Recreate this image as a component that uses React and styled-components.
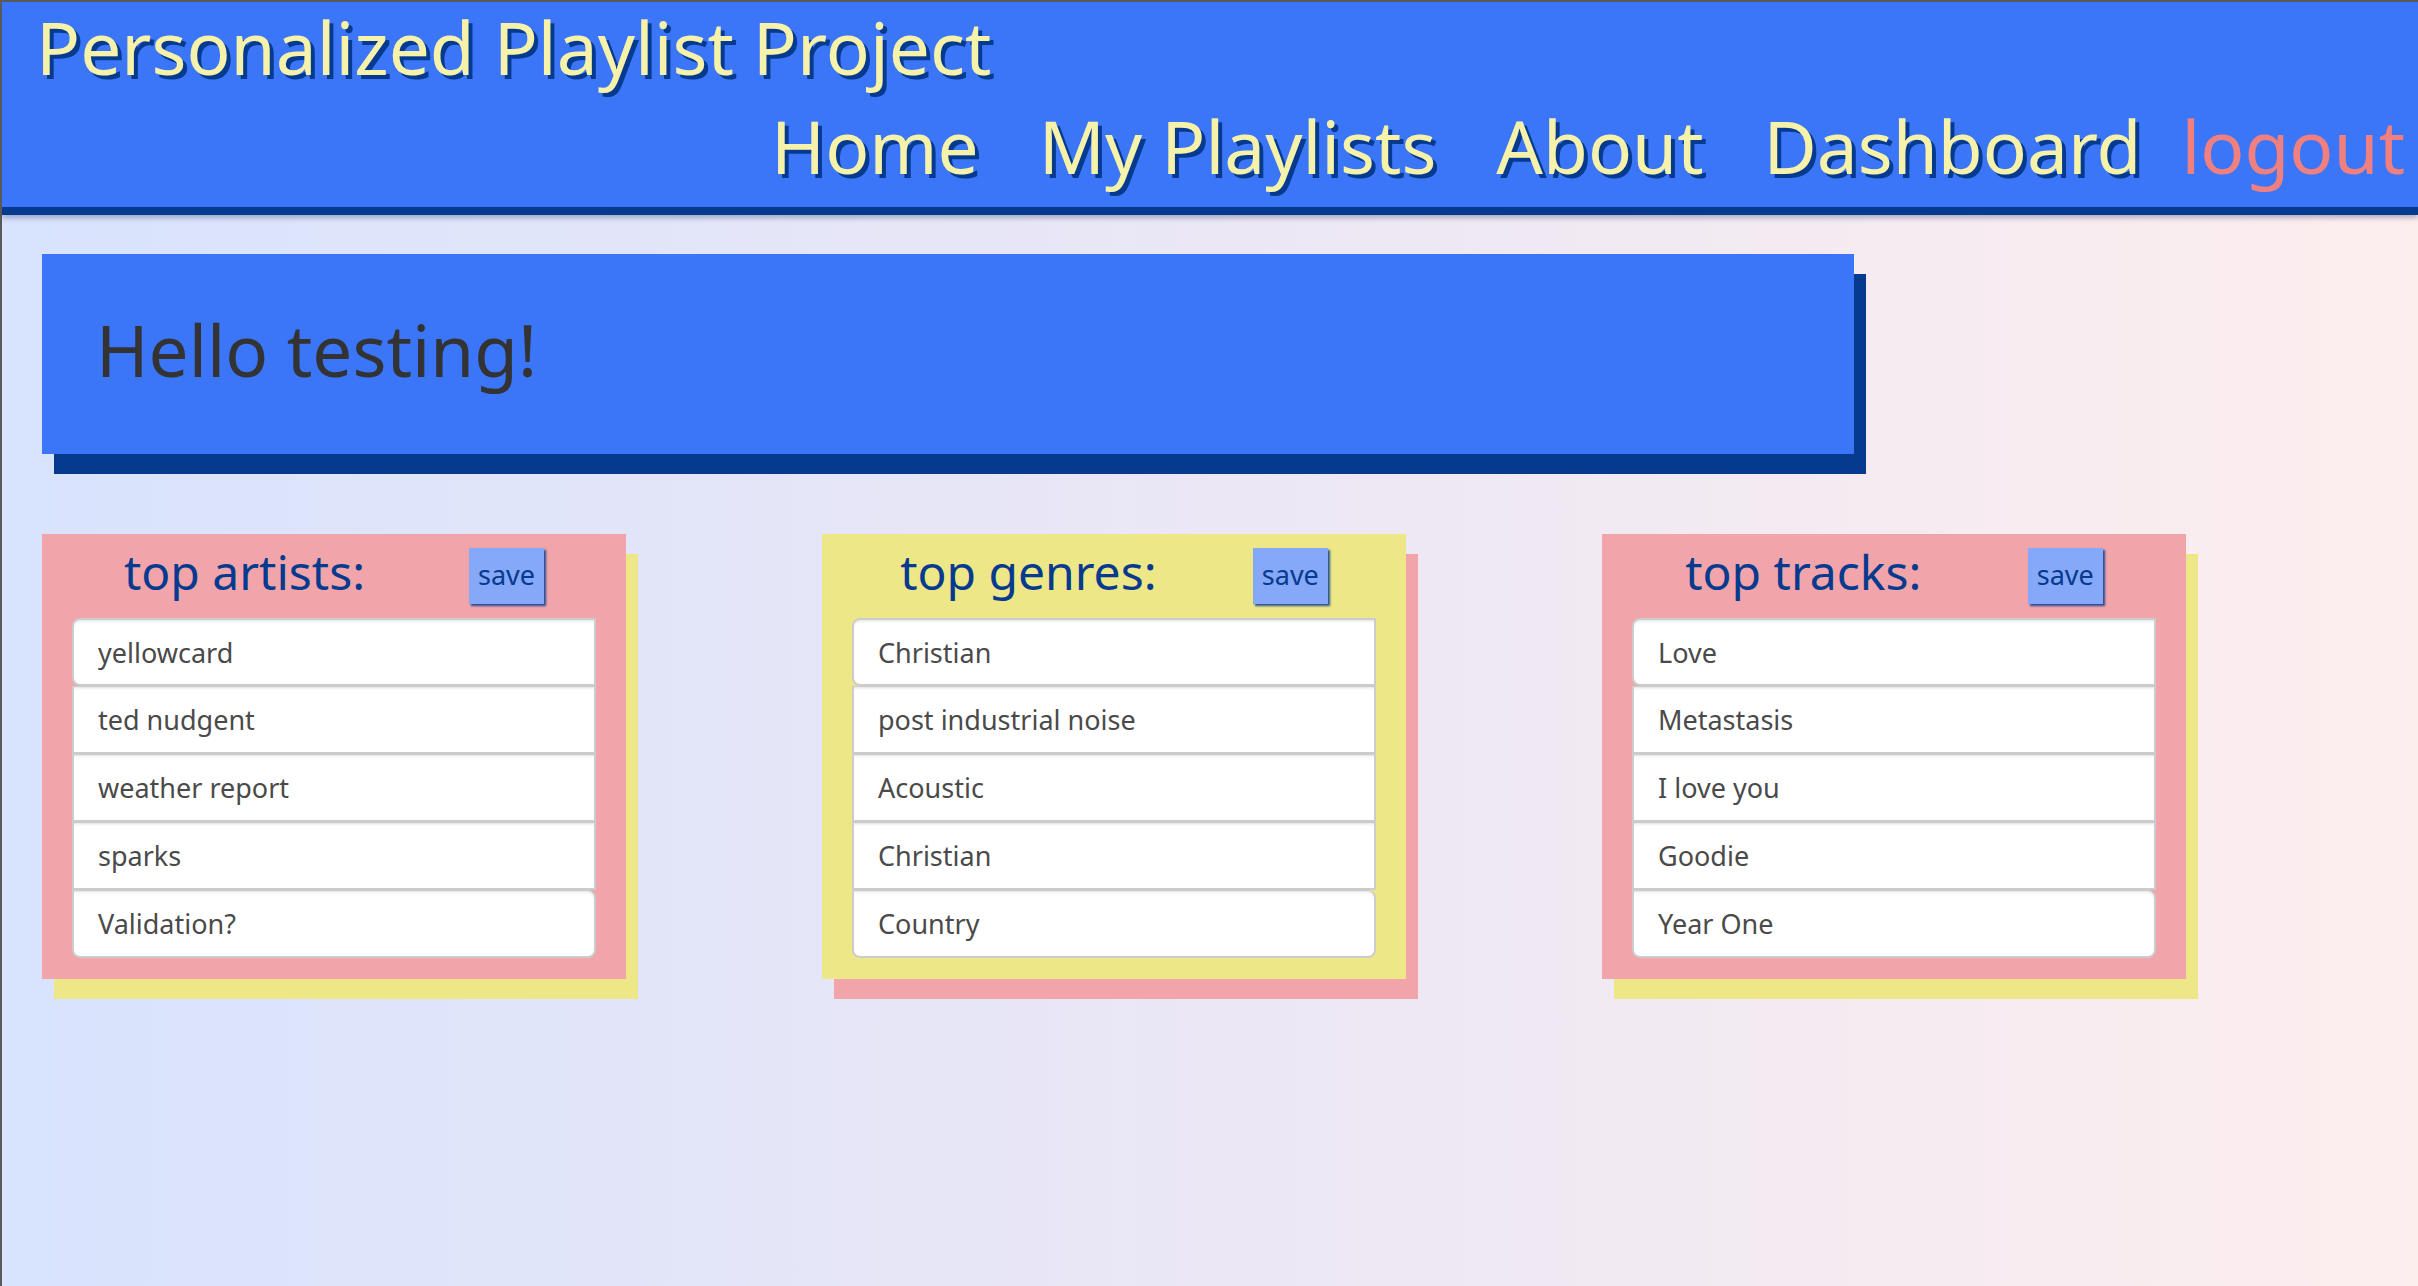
import React from "react";
import styled, { createGlobalStyle } from "styled-components";

const GlobalStyle = createGlobalStyle`
  * {
    box-sizing: border-box;
  }

  body {
    margin: 0;
    min-height: 100vh;
    border-top: 2px solid #595959;
    border-left: 2px solid #595959;
    background: linear-gradient(90deg, #d8e3fd 0%, #ebe7f5 50%, #fdeeee 100%);
    font-family: "Noto Sans", "Open Sans", sans-serif;
  }
`;

const lists = [
  {
    title: "top artists:",
    bg: "#f1a5aa",
    shadow: "#ede787",
    items: ["yellowcard", "ted nudgent", "weather report", "sparks", "Validation?"],
  },
  {
    title: "top genres:",
    bg: "#ede787",
    shadow: "#f1a5aa",
    items: ["Christian", "post industrial noise", "Acoustic", "Christian", "Country"],
  },
  {
    title: "top tracks:",
    bg: "#f1a5aa",
    shadow: "#ede787",
    items: ["Love", "Metastasis", "I love you", "Goodie", "Year One"],
  },
];

const navLinks = ["Home", "My Playlists", "About", "Dashboard"];

export default function App() {
  return (
    <>
      <GlobalStyle />
      <Header>
        <SiteTitle>Personalized Playlist Project</SiteTitle>
        <Nav>
          {navLinks.map((link) => (
            <NavLink key={link}>{link}</NavLink>
          ))}
          <NavLink $logout>logout</NavLink>
        </Nav>
      </Header>
      <Main>
        <Greeting>Hello testing!</Greeting>
        <CardRow>
          {lists.map((list) => (
            <Card key={list.title} $bg={list.bg} $shadow={list.shadow}>
              <CardHeader>
                <CardTitle>{list.title}</CardTitle>
                <SaveButton>save</SaveButton>
              </CardHeader>
              <ItemList>
                {list.items.map((item, i) => (
                  <Item key={i}>{item}</Item>
                ))}
              </ItemList>
            </Card>
          ))}
        </CardRow>
      </Main>
    </>
  );
}

const Header = styled.header`
  background: #3b76f8;
  border-bottom: 8px solid #053a8e;
  box-shadow: 0 3px 5px rgba(5, 30, 90, 0.3);
  padding: 9px 13px 26px 34px;
`;

const SiteTitle = styled.h1`
  margin: 0;
  font-size: 73px;
  line-height: 71px;
  font-weight: 400;
  color: #f6f2aa;
  text-shadow: 4px 4px 0 #053a8e;
`;

const Nav = styled.nav`
  display: flex;
  justify-content: flex-end;
  margin-top: 28px;
`;

const NavLink = styled.a`
  font-size: 73px;
  line-height: 71px;
  margin-left: ${(p) => (p.$logout ? "40px" : "60px")};
  color: ${(p) => (p.$logout ? "#f08080" : "#f6f2aa")};
  text-shadow: ${(p) => (p.$logout ? "none" : "4px 4px 0 #053a8e")};
  cursor: pointer;
`;

const Main = styled.main`
  padding: 39px 0 0 40px;
`;

const Greeting = styled.h2`
  margin: 0;
  width: 1812px;
  height: 200px;
  padding: 60px 54px 0;
  background: #3b76f8;
  box-shadow: 12px 20px 0 #053a8e;
  font-size: 71px;
  line-height: 71px;
  font-weight: 400;
  color: #333333;
`;

const CardRow = styled.section`
  display: flex;
  gap: 196px;
  margin-top: 80px;
`;

const Card = styled.div`
  width: 584px;
  padding: 14px 30px 21px;
  background: ${(p) => p.$bg};
  box-shadow: 12px 20px 0 ${(p) => p.$shadow};
`;

const CardHeader = styled.div`
  display: flex;
  justify-content: space-around;
  align-items: center;
  height: 56px;
`;

const CardTitle = styled.h3`
  margin: 0 0 9px;
  font-size: 48px;
  line-height: 48px;
  font-weight: 400;
  color: #053a8e;
`;

const SaveButton = styled.button`
  height: 56px;
  padding: 0 9px 3px;
  border: none;
  background: #85a8f8;
  color: #053a8e;
  font-family: inherit;
  font-size: 27px;
  box-shadow: 2px 2px 2px rgba(5, 58, 142, 0.85);
  cursor: pointer;
`;

const ItemList = styled.ul`
  list-style: none;
  margin: 14px 0 0;
  padding: 0;
`;

const Item = styled.li`
  display: flex;
  align-items: center;
  height: 68px;
  padding: 0 24px;
  background: #ffffff;
  border: 2px solid #cccccc;
  border-top-width: 1px;
  box-shadow: inset 0 3px 3px -2px rgba(0, 0, 0, 0.12);
  font-size: 27px;
  color: #4a4a4a;

  &:first-child {
    border-top-width: 2px;
    border-radius: 8px 0 0 8px;
  }

  &:last-child {
    border-radius: 0 8px 8px 8px;
  }
`;
